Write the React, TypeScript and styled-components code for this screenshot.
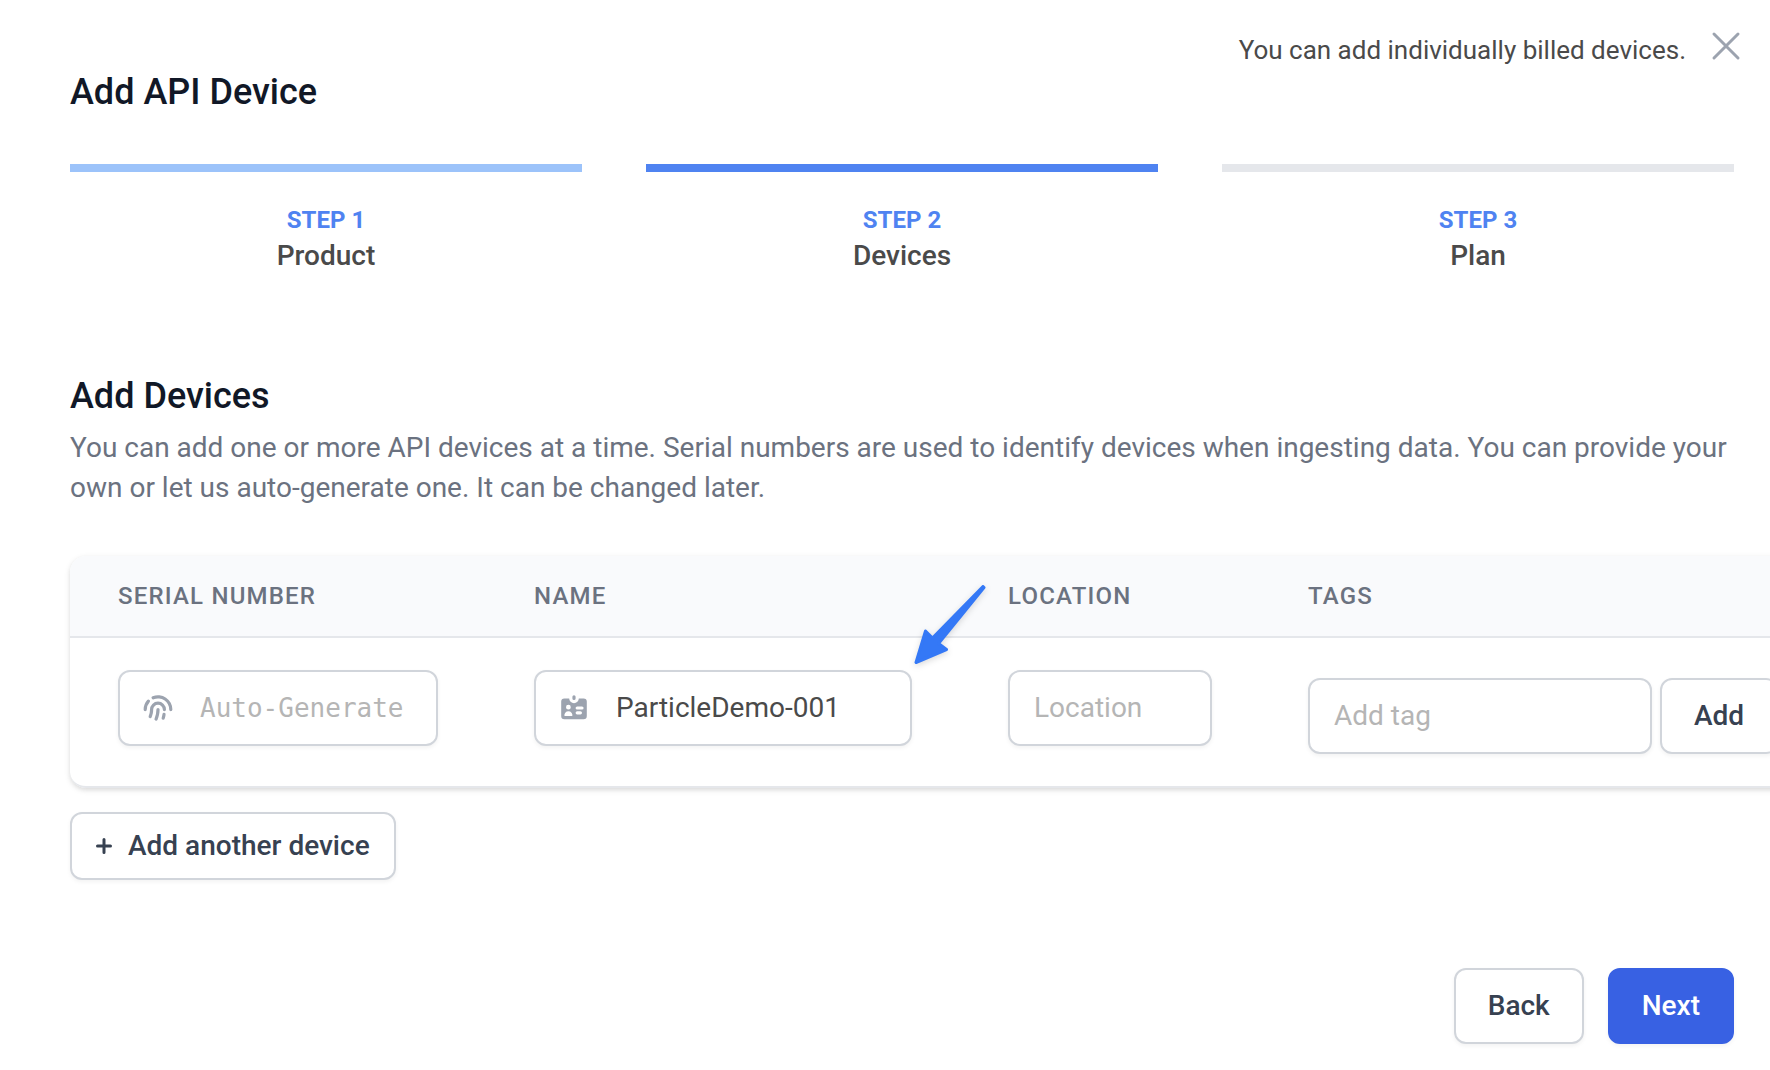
import React, { useState } from "react";
import styled, { createGlobalStyle } from "styled-components";
import { HiFingerPrint, HiIdentification } from "react-icons/hi";

const GlobalStyle = createGlobalStyle`
  *, *::before, *::after { box-sizing: border-box; }
  body {
    margin: 0;
    background: #ffffff;
    color: #4a4a4a;
    font-family: Roboto, "Liberation Sans", sans-serif;
    font-size: 28px;
    line-height: 40px;
    overflow-x: hidden;
  }
  h1, h2, p, ol { margin: 0; padding: 0; }
`;

const Page = styled.main`
  padding: 22px 36px 24px 70px;
`;

const Notice = styled.div`
  display: flex;
  justify-content: flex-end;
  align-items: flex-end;
  gap: 16px;
  height: 48px;
  margin-right: -16px;
  font-size: 26px;
`;

const CloseButton = styled.button`
  display: flex;
  padding: 0;
  border: 0;
  background: none;
  color: #9ca3af;
  cursor: pointer;
`;

const Title = styled.h1`
  color: #111827;
  font-size: 36px;
  font-weight: 500;
  line-height: 44px;
`;

const Steps = styled.ol`
  display: grid;
  grid-template-columns: repeat(3, 1fr);
  gap: 64px;
  margin-top: 50px;
  list-style: none;
`;

const Step = styled.li<{ $bar: string }>`
  display: flex;
  flex-direction: column;
  align-items: center;
  padding-top: 32px;
  border-top: 8px solid ${(p) => p.$bar};
`;

const StepNumber = styled.span`
  color: #4f83f1;
  font-size: 24px;
  font-weight: 700;
  line-height: 32px;
`;

const StepName = styled.span`
  font-weight: 500;
`;

const Section = styled.section`
  margin-top: 98px;
`;

const SectionTitle = styled.h2`
  color: #111827;
  font-size: 36px;
  font-weight: 500;
  line-height: 44px;
`;

const Description = styled.p`
  margin-top: 10px;
  color: #6b7280;
`;

const Panel = styled.div`
  width: max-content;
  min-width: 100%;
  margin-top: 48px;
  overflow: hidden;
  border-bottom: 2px solid #e5e7eb;
  border-radius: 16px;
  box-shadow: 0 2px 6px rgba(0, 0, 0, 0.1), 0 2px 4px rgba(0, 0, 0, 0.06);
`;

const Table = styled.table`
  width: 100%;
  border-collapse: separate;
  border-spacing: 0;
`;

const HeadCell = styled.th`
  padding: 24px 48px;
  border-bottom: 2px solid #e5e7eb;
  background: #f9fafc;
  color: #6b7280;
  font-size: 24px;
  font-weight: 500;
  line-height: 32px;
  letter-spacing: 0.05em;
  text-align: left;
  text-transform: uppercase;
`;

const Cell = styled.td`
  position: relative;
  padding: 32px 48px;
  vertical-align: top;
`;

const Field = styled.label<{ $width: number }>`
  display: flex;
  align-items: center;
  gap: 26px;
  width: ${(p) => p.$width}px;
  height: 76px;
  padding: 0 24px;
  border: 2px solid #d1d5db;
  border-radius: 12px;
  background: #ffffff;
  box-shadow: 0 2px 4px rgba(0, 0, 0, 0.05);
  color: #9ca3af;

  svg {
    flex: none;
    margin-left: -2px;
  }
`;

const Input = styled.input<{ $mono?: boolean }>`
  flex: 1;
  min-width: 0;
  padding: 0;
  border: 0;
  outline: 0;
  background: transparent;
  color: #4a4a4a;
  font-family: ${(p) => (p.$mono ? '"DejaVu Sans Mono", monospace' : "inherit")};
  font-size: ${(p) => (p.$mono ? 26 : 28)}px;
  line-height: 40px;

  &::placeholder {
    color: #b5b5b5;
    opacity: 1;
  }
`;

const TagRow = styled.div`
  display: flex;
  gap: 8px;
  padding-top: 8px;
`;

const Button = styled.button<{ $primary?: boolean; $compact?: boolean }>`
  display: inline-flex;
  align-items: center;
  gap: 16px;
  height: ${(p) => (p.$compact ? 68 : 76)}px;
  padding: 0 ${(p) => (p.$compact ? 24 : 32)}px;
  border: 2px solid ${(p) => (p.$primary ? "#3861e3" : "#d1d5db")};
  border-radius: 12px;
  background: ${(p) => (p.$primary ? "#3861e3" : "#ffffff")};
  box-shadow: 0 2px 4px rgba(0, 0, 0, 0.05);
  color: ${(p) => (p.$primary ? "#ffffff" : "#374151")};
  font-family: inherit;
  font-size: 28px;
  font-weight: 500;
  line-height: 40px;
  cursor: pointer;
`;

const AddRow = styled.div`
  display: flex;
  margin-top: 24px;
`;

const Footer = styled.footer`
  display: flex;
  justify-content: flex-end;
  gap: 24px;
  margin-top: 88px;
`;

const Pointer = styled.svg`
  position: absolute;
  top: -56px;
  right: -28px;
  overflow: visible;
  filter: drop-shadow(0 2px 3px rgba(0, 0, 0, 0.15));
  pointer-events: none;
`;

const steps = [
  { name: "Product", bar: "#9cc3fa" },
  { name: "Devices", bar: "#4f83f1" },
  { name: "Plan", bar: "#e5e7eb" },
];

function PointerArrow() {
  return (
    <Pointer width="76" height="84" viewBox="0 0 76 84" aria-hidden="true">
      <path
        d="M4 80.500L13.500 49L20.500 56L71 4.500L72 5.500L26.500 61.500L34.500 67.500L4 80.500Z"
        fill="#3478f6"
        stroke="#3478f6"
        strokeWidth="3"
        strokeLinejoin="round"
      />
    </Pointer>
  );
}

export default function App() {
  const [serial, setSerial] = useState("");
  const [name, setName] = useState("ParticleDemo-001");
  const [location, setLocation] = useState("");
  const [tag, setTag] = useState("");

  return (
    <>
      <GlobalStyle />
      <Page>
        <Notice>
          <span>You can add individually billed devices.</span>
          <CloseButton type="button" aria-label="Close">
            <svg width="48" height="48" viewBox="0 0 24 24" fill="none" stroke="currentColor" strokeWidth="1.5" strokeLinecap="round">
              <path d="M6 18L18 6M6 6l12 12" />
            </svg>
          </CloseButton>
        </Notice>
        <Title>Add API Device</Title>
        <Steps>
          {steps.map((step, i) => (
            <Step key={step.name} $bar={step.bar}>
              <StepNumber>STEP {i + 1}</StepNumber>
              <StepName>{step.name}</StepName>
            </Step>
          ))}
        </Steps>
        <Section>
          <SectionTitle>Add Devices</SectionTitle>
          <Description>
            You can add one or more API devices at a time. Serial numbers are used to identify devices when
            ingesting data. You can provide your own or let us auto-generate one. It can be changed later.
          </Description>
          <Panel>
            <Table>
              <thead>
                <tr>
                  <HeadCell scope="col">Serial Number</HeadCell>
                  <HeadCell scope="col">Name</HeadCell>
                  <HeadCell scope="col">Location</HeadCell>
                  <HeadCell scope="col">Tags</HeadCell>
                </tr>
              </thead>
              <tbody>
                <tr>
                  <Cell>
                    <Field $width={320}>
                      <HiFingerPrint size={32} />
                      <Input
                        $mono
                        aria-label="Serial number"
                        placeholder="Auto-Generate"
                        value={serial}
                        onChange={(e) => setSerial(e.target.value)}
                      />
                    </Field>
                  </Cell>
                  <Cell>
                    <Field $width={378}>
                      <HiIdentification size={32} />
                      <Input aria-label="Name" value={name} onChange={(e) => setName(e.target.value)} />
                    </Field>
                    <PointerArrow />
                  </Cell>
                  <Cell>
                    <Field $width={204}>
                      <Input
                        aria-label="Location"
                        placeholder="Location"
                        value={location}
                        onChange={(e) => setLocation(e.target.value)}
                      />
                    </Field>
                  </Cell>
                  <Cell>
                    <TagRow>
                      <Field $width={344}>
                        <Input
                          aria-label="Tag"
                          placeholder="Add tag"
                          value={tag}
                          onChange={(e) => setTag(e.target.value)}
                        />
                      </Field>
                      <Button type="button">Add</Button>
                    </TagRow>
                  </Cell>
                </tr>
              </tbody>
            </Table>
          </Panel>
          <AddRow>
            <Button type="button" $compact>
              <svg width="16" height="16" viewBox="0 0 16 16" fill="none" stroke="currentColor" strokeWidth="3" strokeLinecap="round">
                <path d="M8 1.500v13M1.500 8h13" />
              </svg>
              Add another device
            </Button>
          </AddRow>
        </Section>
        <Footer>
          <Button type="button">Back</Button>
          <Button type="button" $primary>
            Next
          </Button>
        </Footer>
      </Page>
    </>
  );
}
